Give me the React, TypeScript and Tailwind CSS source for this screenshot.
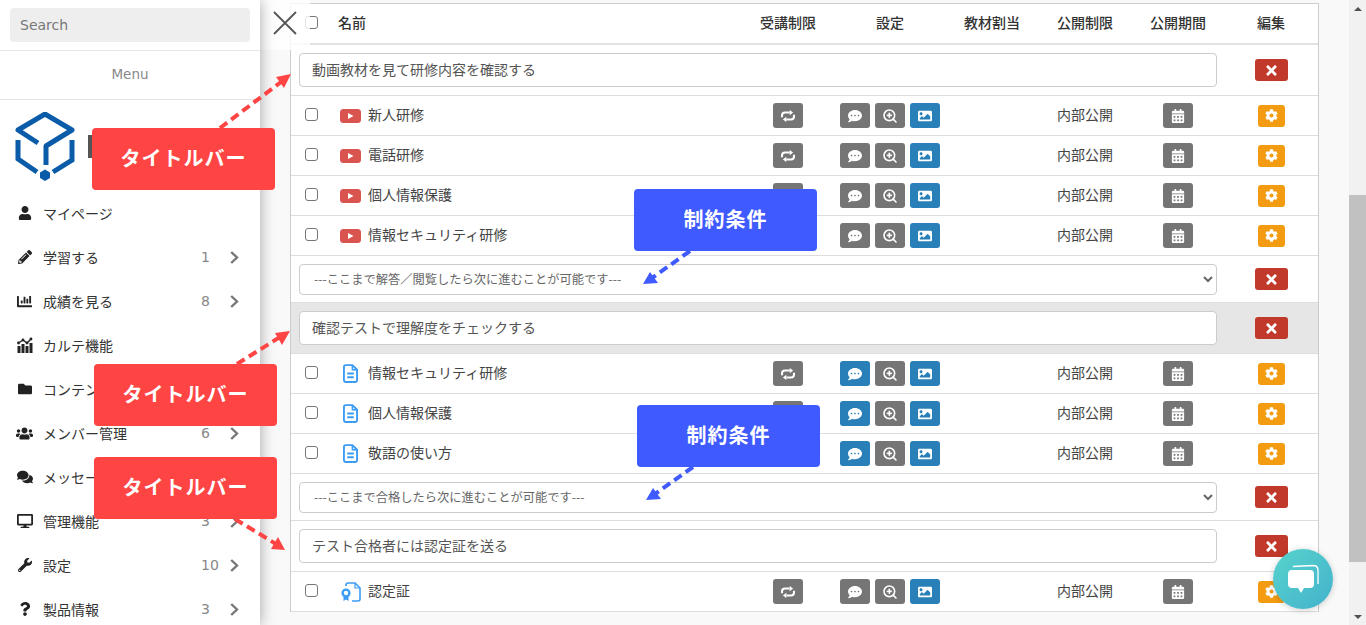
import { ZoomIn } from "lucide-react"
import {
  FaUser, FaPencilAlt, FaChartBar, FaFolder, FaUsers, FaComments, FaDesktop, FaWrench, FaQuestion,
  FaCommentDots, FaImage, FaCalendarAlt, FaCog, FaTimes,
} from "react-icons/fa"

const latin = "font-['DejaVu_Sans','Noto_Sans_CJK_JP',sans-serif]"
const gridCols = "grid-cols-[38px_413px_92px_112px_92px_94px_92px_94px]"
const headers = ["受講制限", "設定", "教材割当", "公開制限", "公開期間", "編集"]

function KarteIcon() {
  return (
    <svg viewBox="0 0 16 16" className="w-4 h-4" fill="#222">
      <rect x="0.5" y="9" width="3" height="7" />
      <rect x="4.5" y="7" width="3" height="9" />
      <rect x="8.5" y="9" width="3" height="7" />
      <rect x="12.5" y="6" width="3" height="10" />
      <path d="M1.5 6 L6 3 L10 6 L14 2" fill="none" stroke="#222" strokeWidth="1.4" />
      <circle cx="1.5" cy="6" r="1.4" />
      <circle cx="6" cy="3" r="1.4" />
      <circle cx="10" cy="6" r="1.4" />
      <circle cx="14" cy="2" r="1.4" />
    </svg>
  )
}

const menu = [
  { icon: <FaUser size={14} />, label: "マイページ" },
  { icon: <FaPencilAlt size={14} />, label: "学習する", count: "1", arrow: true },
  { icon: <FaChartBar size={15} />, label: "成績を見る", count: "8", arrow: true },
  { icon: <KarteIcon />, label: "カルテ機能" },
  { icon: <FaFolder size={14} />, label: "コンテンツ管理" },
  { icon: <FaUsers size={17} />, label: "メンバー管理", count: "6", arrow: true },
  { icon: <FaComments size={16} />, label: "メッセージ" },
  { icon: <FaDesktop size={16} />, label: "管理機能", count: "3", arrow: true },
  { icon: <FaWrench size={14} />, label: "設定", count: "10", arrow: true },
  { icon: <FaQuestion size={14} />, label: "製品情報", count: "3", arrow: true },
]

function Logo() {
  return (
    <svg viewBox="0 0 60 69" className="w-[60px] h-[69px]" fill="none" stroke="#0b5ca8" strokeWidth="5">
      <path d="M23 31 L3 18 L30 2 L57 18 L31 34 V53" strokeLinejoin="round" />
      <path d="M3 28 V47 L22 60" />
      <path d="M57 28 V48 L38 60" />
      <path d="M30 57.5 L35 60.5 V66 L30 69 L25 66 V60.5 Z" fill="#0b5ca8" stroke="none" />
    </svg>
  )
}

function Chevron() {
  return (
    <svg viewBox="0 0 9 13" className="w-[9px] h-[13px] mr-[21px]" fill="none" stroke="#777" strokeWidth="2.4">
      <path d="M1.2 1 L7 6.5 L1.2 12" />
    </svg>
  )
}

function Sidebar() {
  return (
    <aside className="relative z-10 w-[260px] shrink-0 h-[625px] overflow-hidden bg-white shadow-[0_0_14px_rgba(0,0,0,0.35)]">
      <div className="h-[51px] px-[10px] pt-2 border-b border-[#e5e5e5]">
        <input
          placeholder="Search"
          className={`w-full h-[34px] rounded bg-[#eeeeee] px-[10px] text-[14px] outline-none placeholder:text-[#777] ${latin}`}
        />
      </div>
      <div className={`h-[49px] flex items-center justify-center pb-[2px] border-b border-[#e5e5e5] text-[13.5px] text-[#888] ${latin}`}>
        Menu
      </div>
      <div className="h-[91px] pl-[15px] pt-[12px] flex items-start">
        <Logo />
        <div className="ml-[13px] mt-[23px] w-[4px] h-[23px] bg-[#555]" />
      </div>
      <ul>
        {menu.map((m) => (
          <li key={m.label} className="h-[44px] flex items-center text-[14px] text-[#333]">
            <span className="w-[43px] pl-[6px] flex justify-center text-[#222] shrink-0">{m.icon}</span>
            <span className="flex-1">{m.label}</span>
            {m.count && <span className={`${latin} w-[29px] text-left text-[14px] text-[#888]`}>{m.count}</span>}
            {m.arrow && <Chevron />}
          </li>
        ))}
      </ul>
    </aside>
  )
}

function IconBtn({ children, blue }: { children: React.ReactNode; blue?: boolean }) {
  return (
    <span className={`w-[30px] h-[25px] rounded-[3px] flex items-center justify-center text-white ${blue ? "bg-[#2980b9]" : "bg-[#757575]"}`}>
      {children}
    </span>
  )
}

function RepeatIcon() {
  return (
    <svg viewBox="0 0 18 14" className="w-[16px] h-[12px]" fill="#fff" stroke="none">
      <path d="M2 8.5 V6.5 Q2 3 5.5 3 H11" fill="none" stroke="#fff" strokeWidth="2.4" />
      <path d="M11 0 L15 3 L11 6 Z" />
      <path d="M16 5.5 V7.5 Q16 11 12.5 11 H7" fill="none" stroke="#fff" strokeWidth="2.4" />
      <path d="M7 8 L3 11 L7 14 Z" />
    </svg>
  )
}

function VideoIcon() {
  return (
    <svg viewBox="0 0 21 14" className="w-[21px] h-[14px]">
      <rect width="21" height="14" rx="3.5" fill="#d9534f" />
      <path d="M8 4 L13.5 7 L8 10 Z" fill="#fff" />
    </svg>
  )
}

function FileIcon() {
  return (
    <svg viewBox="0 0 16 20" className="w-[15px] h-[19px] mx-[3px]" fill="none" stroke="#3b9cf5" strokeWidth="2">
      <path d="M10 1 H3 Q1 1 1 3 V17 Q1 19 3 19 H13 Q15 19 15 17 V6 Z" />
      <path d="M10 1 V6 H15" strokeWidth="1.6" />
      <path d="M4.5 10 H11.5 M4.5 14 H11.5" />
    </svg>
  )
}

function CertIcon() {
  return (
    <svg viewBox="0 0 21 20" className="w-[21px] h-[20px]" fill="none" stroke="#3b9cf5" strokeWidth="1.6">
      <path d="M6 4 V3 Q6 1 8 1 H15 L20 6 V17 Q20 19 18 19 H12" />
      <path d="M15 1 V6 H20" strokeWidth="1.2" />
      <circle cx="6" cy="11" r="3.4" strokeWidth="2.4" />
      <path d="M3.5 14.5 V19 L6 17.5 L8.5 19 V14.5 Z" fill="#3b9cf5" stroke="none" />
    </svg>
  )
}

function CheckBox() {
  return <input type="checkbox" readOnly className="w-[13px] h-[13px] ml-[14px] mb-[2px] block appearance-none rounded-[3px] border border-[#767676] bg-white" />
}

function Row({ icon, name, blueComment }: { icon: React.ReactNode; name: string; blueComment?: boolean }) {
  return (
    <div className={`grid ${gridCols} h-[40px] items-center border-b border-[#dddddd]`}>
      <CheckBox />
      <div className="pl-[11px] flex items-center gap-[7px] text-[14px] text-[#444]">
        {icon}
        <span className="mb-[2px]">{name}</span>
      </div>
      <div className="flex justify-center">
        <IconBtn><RepeatIcon /></IconBtn>
      </div>
      <div className="flex justify-center gap-[5px]">
        <IconBtn blue={blueComment}><FaCommentDots size={14} /></IconBtn>
        <IconBtn><ZoomIn size={16} strokeWidth={2.4} /></IconBtn>
        <IconBtn blue><FaImage size={14} /></IconBtn>
      </div>
      <div />
      <div className="text-center text-[14px] text-[#444] mb-[2px]">内部公開</div>
      <div className="flex justify-center">
        <IconBtn><FaCalendarAlt size={14} /></IconBtn>
      </div>
      <div className="flex justify-center">
        <span className="w-[27px] h-[22px] rounded-[3px] bg-[#f39c12] flex items-center justify-center text-white text-[13px]">
          <FaCog />
        </span>
      </div>
    </div>
  )
}

function DeleteBtn() {
  return (
    <span className="w-[33px] h-[22px] rounded-[3px] bg-[#c0392b] flex items-center justify-center text-white text-[15px]">
      <FaTimes />
    </span>
  )
}

function TitleRow({ value, gray }: { value: string; gray?: boolean }) {
  return (
    <div className={`grid grid-cols-[933px_94px] h-[51px] items-center border-b border-[#dddddd] ${gray ? "bg-[#e6e6e6]" : ""}`}>
      <div className="pl-2 pr-[7px]">
        <input
          readOnly
          value={value}
          className="w-full h-[34px] px-3 pb-[2px] rounded border border-[#cccccc] bg-white text-[14px] text-[#555] outline-none"
        />
      </div>
      <div className="flex justify-center"><DeleteBtn /></div>
    </div>
  )
}

function SelectRow({ value }: { value: string }) {
  return (
    <div className="grid grid-cols-[933px_94px] h-[47px] items-center border-b border-[#dddddd]">
      <div className="pl-2 pr-[7px]">
        <select
          value={value}
          onChange={() => {}}
          className="w-full h-[31px] pl-[10px] pr-1 pb-[1px] rounded border border-[#cccccc] bg-white text-[12.25px] text-[#666] outline-none"
        >
          <option>{value}</option>
        </select>
      </div>
      <div className="flex justify-center"><DeleteBtn /></div>
    </div>
  )
}

function Callout({ className, children }: { className: string; children: React.ReactNode }) {
  return (
    <div className={`absolute z-30 w-[183px] h-[62px] pb-[2px] rounded-[4px] flex items-center justify-center text-white text-[20px] tracking-[1px] font-semibold ${className}`}>
      {children}
    </div>
  )
}

function Arrows() {
  const red = "#ff4444"
  const blue = "#3f5bff"
  return (
    <svg className="absolute left-0 top-0 z-20 pointer-events-none" width="1366" height="625" fill="none" strokeWidth="4" strokeDasharray="9 5">
      <path d="M220 128 L281 82" stroke={red} />
      <polygon points="291,74 276,77 284,88" fill={red} stroke="none" />
      <path d="M237 364 L280 337" stroke={red} />
      <polygon points="290,331 275,333 282,345" fill={red} stroke="none" />
      <path d="M235 519 L276 544" stroke={red} />
      <polygon points="285,550 278,537 271,549" fill={red} stroke="none" />
      <path d="M690 251 L652 278" stroke={blue} />
      <polygon points="643,284 658,283 650,272" fill={blue} stroke="none" />
      <path d="M693 467 L655 494" stroke={blue} />
      <polygon points="646,500 661,499 653,488" fill={blue} stroke="none" />
    </svg>
  )
}

function ChatWidget() {
  return (
    <div className="absolute z-30 left-[1273px] top-[549px] w-[60px] h-[60px] rounded-full bg-gradient-to-br from-[#58d3cd] to-[#43b2cb] shadow-[0_1px_6px_rgba(0,0,0,0.2)] flex items-center justify-center">
      <svg viewBox="0 0 34 34" className="w-[34px] h-[34px]">
        <path d="M7 4.5 L27 3.5 Q32 3.5 32 8 V22" fill="none" stroke="#fff" strokeWidth="1.3" />
        <path d="M6 8 H24 Q28 8 28 12 V22 Q28 26 24 26 H18 L15 31 L12 26 H6 Q2 26 2 22 V12 Q2 8 6 8 Z" fill="#fff" />
      </svg>
    </div>
  )
}

function Scrollbar() {
  return (
    <div className="w-[17px] shrink-0 h-[625px] bg-[#f1f1f1] flex flex-col">
      <div className="h-[17px] flex items-center justify-center">
        <span className="w-0 h-0 border-x-4 border-x-transparent border-b-4 border-b-[#505050]" />
      </div>
      <div className="h-[178px]" />
      <div className="h-[367px] bg-[#c1c1c1]" />
      <div className="flex-1" />
      <div className="h-[17px] flex items-center justify-center">
        <span className="w-0 h-0 border-x-4 border-x-transparent border-t-4 border-t-[#505050]" />
      </div>
    </div>
  )
}

export default function App() {
  const v = <VideoIcon />
  const f = <FileIcon />
  return (
    <div className="relative flex w-[1366px] h-[625px] overflow-hidden bg-[#f9f9f9] font-['Noto_Sans_CJK_JP',sans-serif]">
      <Sidebar />
      <main className="flex-1 pl-[30px] pt-[3px]">
        <div className="w-[1029px] bg-white border-x border-t border-[#cccccc] border-b-0">
          <div className={`grid ${gridCols} h-[41px] items-center border-b-2 border-[#e2e2e2] text-[14px] font-medium text-[#333]`}>
            <CheckBox />
            <div className="pl-[9px] mb-[2px]">名前</div>
            {headers.map((h) => (
              <div key={h} className="text-center mb-[2px]">{h}</div>
            ))}
          </div>
          <TitleRow value="動画教材を見て研修内容を確認する" />
          <Row icon={v} name="新人研修" />
          <Row icon={v} name="電話研修" />
          <Row icon={v} name="個人情報保護" />
          <Row icon={v} name="情報セキュリティ研修" />
          <SelectRow value="---ここまで解答／閲覧したら次に進むことが可能です---" />
          <TitleRow value="確認テストで理解度をチェックする" gray />
          <Row icon={f} name="情報セキュリティ研修" blueComment />
          <Row icon={f} name="個人情報保護" blueComment />
          <Row icon={f} name="敬語の使い方" blueComment />
          <SelectRow value="---ここまで合格したら次に進むことが可能です---" />
          <TitleRow value="テスト合格者には認定証を送る" />
          <Row icon={<CertIcon />} name="認定証" />
        </div>
      </main>
      <Scrollbar />

      {/* close button over the table's corner */}
      <div className="absolute z-[5] left-[260px] top-0 w-[50px] h-[50px] bg-white/80 pl-[13px] pt-[11px]">
        <svg viewBox="0 0 24 24" className="w-6 h-6" stroke="#555" strokeWidth="1.8">
          <path d="M1 1 L23 23 M23 1 L1 23" />
        </svg>
      </div>

      <Arrows />
      <Callout className="left-[92px] top-[128px] bg-[#ff4444]">タイトルバー</Callout>
      <Callout className="left-[94px] top-[364px] bg-[#ff4444]">タイトルバー</Callout>
      <Callout className="left-[94px] top-[457px] bg-[#ff4444]">タイトルバー</Callout>
      <Callout className="left-[634px] top-[189px] bg-[#3f5bff]">制約条件</Callout>
      <Callout className="left-[637px] top-[405px] bg-[#3f5bff]">制約条件</Callout>
      <ChatWidget />
    </div>
  )
}
